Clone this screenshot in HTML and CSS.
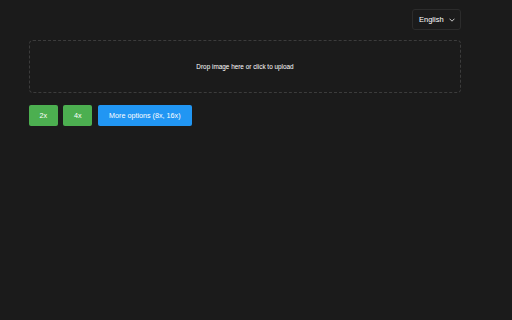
FILE: index.html
```html
<!DOCTYPE html>
<html>
<head>
<meta charset="utf-8">
<link rel="stylesheet" href="styles.css">
</head>
<body>
<div class="page">
  <div class="topbar">
    <div class="lang">
      <span class="lang-label">English</span>
      <svg class="chev" width="6" height="4" viewBox="0 0 6 4"><path d="M0.5 0.7 L3 3.2 L5.5 0.7" fill="none" stroke="#ddd" stroke-width="0.9"/></svg>
    </div>
  </div>
  <div class="dropzone">Drop image here or click to upload</div>
  <div class="actions">
    <button class="btn green">2x</button>
    <button class="btn green">4x</button>
    <button class="btn blue">More options (8x, 16x)</button>
  </div>
</div>
</body>
</html>
```
FILE: styles.css
```css
html, body {
  margin: 0;
  padding: 0;
  background: #1b1b1b;
  height: 100%;
}
body {
  font-family: "Liberation Sans", Arial, sans-serif;
  color: #fff;
}
.page {
  width: 432px;
  padding: 9px 0 0 29px;
}
.topbar {
  display: flex;
  justify-content: flex-end;
  height: 21px;
}
.lang {
  width: 49px;
  height: 21px;
  box-sizing: border-box;
  border: 1px solid #2c2c2c;
  border-radius: 3px;
  background: #1b1b1b;
  display: flex;
  align-items: center;
  justify-content: space-between;
  padding: 0 5px 0 6px;
  font-size: 7.5px;
  color: #fff;
}
.chev { display: block; }
.dropzone {
  margin-top: 10px;
  height: 53px;
  box-sizing: border-box;
  border: 1px dashed #3c3c3c;
  border-radius: 4px;
  display: flex;
  align-items: center;
  justify-content: center;
  font-size: 6.4px;
  color: #fff;
}
.actions {
  display: flex;
  gap: 5.6px;
  margin-top: 12px;
}
.btn {
  font-family: "Liberation Sans", Arial, sans-serif;
  border: none;
  border-radius: 2px;
  height: 21px;
  color: #fff;
  font-size: 7.2px;
  padding: 0;
  cursor: pointer;
}
.green { background: #4caf50; width: 28.8px; }
.blue { background: #2196f3; width: 94px; }
```
